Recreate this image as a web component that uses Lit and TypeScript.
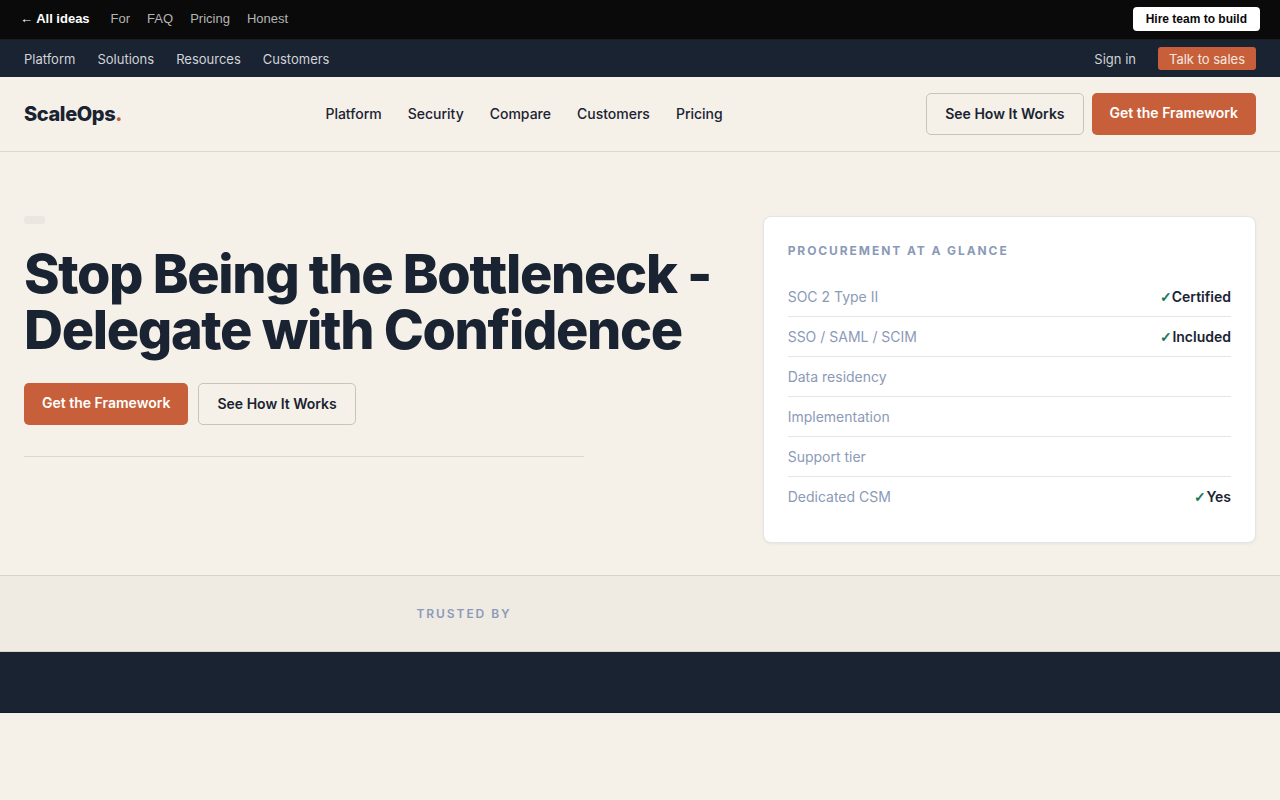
import { LitElement, html, css, nothing } from "lit";
import { customElement } from "lit/decorators.js";

interface Fact {
  label: string;
  value?: string;
}

const FACTS: Fact[] = [
  { label: "SOC 2 Type II", value: "Certified" },
  { label: "SSO / SAML / SCIM", value: "Included" },
  { label: "Data residency" },
  { label: "Implementation" },
  { label: "Support tier" },
  { label: "Dedicated CSM", value: "Yes" },
];

const link = (text: string) => html`<a href="#">${text}</a>`;

@customElement("app-root")
export class AppRoot extends LitElement {
  static styles = css`
    :host {
      display: block;
      min-height: 100vh;
      background: #f5f0e8;
      color: #1a2332;
      font-family: Inter, sans-serif;
      font-size: 14px;
      line-height: 20px;
    }
    * {
      box-sizing: border-box;
    }
    a {
      color: inherit;
      text-decoration: none;
    }
    button {
      font: inherit;
      border: 0;
      margin: 0;
      cursor: pointer;
      white-space: nowrap;
    }
    h1,
    h2 {
      margin: 0;
    }

    .ideas {
      display: flex;
      align-items: center;
      justify-content: space-between;
      padding: 7px 20px 8px;
      border-bottom: 1px solid #1c1f22;
      background: #0a0a0a;
      color: #b4b4b4;
      font-family: "Liberation Sans", Arial, sans-serif;
      font-size: 13px;
    }
    .ideas-links {
      display: flex;
      gap: 17px;
    }
    .ideas-home {
      margin-right: 4px;
      color: #fff;
      font-weight: 700;
    }
    .hire {
      padding: 4px 13px;
      border-radius: 4px;
      background: #fff;
      color: #0a0a0a;
      font-size: 12px;
      font-weight: 700;
      line-height: 16px;
    }

    .utility {
      display: flex;
      align-items: center;
      justify-content: space-between;
      padding: 7px 24px;
      background: #1a2332;
      color: #d1d3d6;
      font-size: 13px;
    }
    .utility-links {
      display: flex;
      align-items: center;
      gap: 22px;
    }
    .talk {
      padding: 2px 11px 1px;
      border-radius: 3px;
      background: #c75f3a;
      color: #f6e8e0;
    }

    .header {
      display: flex;
      align-items: center;
      justify-content: space-between;
      padding: 16px 24px;
      border-bottom: 1px solid #dcd8d1;
    }
    .logo {
      font-size: 20px;
      font-weight: 800;
      line-height: 24px;
      letter-spacing: -0.02em;
    }
    .dot {
      color: #c75f3a;
    }
    .main-links {
      display: flex;
      gap: 26px;
      font-weight: 500;
    }
    .actions {
      display: flex;
      gap: 8px;
    }
    .primary,
    .ghost {
      border-radius: 5px;
      font-weight: 600;
    }
    .primary {
      padding: 10px 18px 12px;
      background: #c75f3a;
      color: #fff;
    }
    .ghost {
      padding: 10px 18px;
      border: 1px solid #c7c3bd;
      background: transparent;
      color: #1a2332;
    }

    .hero {
      display: grid;
      grid-template-columns: 1.4fr 1fr;
      gap: 48px;
      align-items: start;
      padding: 64px 24px 32px;
    }
    .pill {
      width: 21px;
      height: 8px;
      border-radius: 3px;
      background: #ebe7e0;
    }
    .title {
      margin: 22px 0 25px;
      font-size: 54px;
      font-weight: 800;
      line-height: 56px;
      letter-spacing: -0.025em;
    }
    .hero-actions {
      display: flex;
      gap: 10px;
    }
    .rule {
      max-width: 560px;
      margin-top: 31px;
      border-top: 1px solid #dcd8d1;
    }

    .card {
      padding: 24px 24px 26px;
      border: 1px solid #e3e5e6;
      border-radius: 8px;
      background: #fff;
      box-shadow: 0 1px 3px rgba(26, 35, 50, 0.06);
    }
    .caption {
      color: #8b9ab8;
      font-size: 12px;
      font-weight: 700;
      letter-spacing: 0.16em;
      text-transform: uppercase;
    }
    .facts {
      width: 100%;
      margin-top: 16px;
      border-collapse: collapse;
    }
    .facts tr + tr {
      border-top: 1px solid #e3e5e6;
    }
    .facts th,
    .facts td {
      padding: 10px 0 9px;
    }
    .facts th {
      color: #8b9ab8;
      font-weight: 400;
      text-align: left;
    }
    .facts td {
      font-weight: 600;
      text-align: right;
    }
    .check {
      color: #1a7a5a;
      font-family: Roboto, sans-serif;
      font-weight: 700;
      line-height: 1;
    }

    .trusted {
      display: flex;
      align-items: center;
      justify-content: center;
      gap: 32px;
      padding: 28px 24px;
      border-top: 1px solid #d8d4cc;
      border-bottom: 1px solid #d8d4cc;
      background: #efeae2;
      line-height: 19px;
    }
    .trusted .caption {
      font-weight: 600;
    }
    .logos {
      flex: 0 1 320px;
    }
    .band {
      padding: 30px 24px;
      border-bottom: 1px solid #151d2b;
      background: #1a2332;
    }
  `;

  render() {
    return html`
      <nav class="ideas" aria-label="Ideas">
        <div class="ideas-links">
          <a class="ideas-home" href="#">← All ideas</a>
          ${["For", "FAQ", "Pricing", "Honest"].map(link)}
        </div>
        <button class="hire" type="button">Hire team to build</button>
      </nav>
      <nav class="utility" aria-label="Utility">
        <div class="utility-links">
          ${["Platform", "Solutions", "Resources", "Customers"].map(link)}
        </div>
        <div class="utility-links">
          ${link("Sign in")}
          <button class="talk" type="button">Talk to sales</button>
        </div>
      </nav>
      <header class="header">
        <a class="logo" href="#">ScaleOps<span class="dot">.</span></a>
        <nav class="main-links" aria-label="Main">
          ${["Platform", "Security", "Compare", "Customers", "Pricing"].map(link)}
        </nav>
        <div class="actions">
          <button class="ghost" type="button">See How It Works</button>
          <button class="primary" type="button">Get the Framework</button>
        </div>
      </header>
      <main>
        <section class="hero">
          <div>
            <div class="pill"></div>
            <h1 class="title">Stop Being the Bottleneck - Delegate with Confidence</h1>
            <div class="hero-actions">
              <button class="primary" type="button">Get the Framework</button>
              <button class="ghost" type="button">See How It Works</button>
            </div>
            <div class="rule"></div>
          </div>
          <aside class="card">
            <h2 class="caption">Procurement at a glance</h2>
            <table class="facts">
              <tbody>
                ${FACTS.map(
                  (f) => html`<tr>
                    <th scope="row">${f.label}</th>
                    <td>${f.value ? html`<span class="check">✓</span>${f.value}` : nothing}</td>
                  </tr>`
                )}
              </tbody>
            </table>
          </aside>
        </section>
        <section class="trusted">
          <span class="caption">Trusted by</span>
          <div class="logos"></div>
        </section>
        <section class="band"></section>
      </main>
    `;
  }
}
